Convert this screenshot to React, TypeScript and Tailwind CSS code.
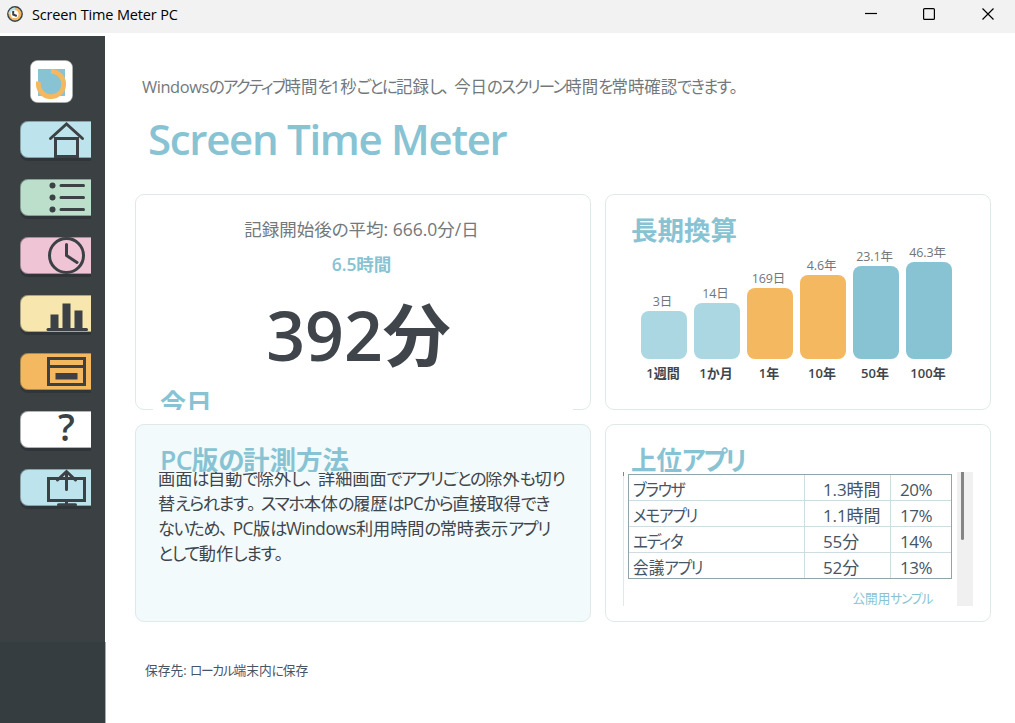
import type {ReactNode} from "react";

const INK = "#3b4144";

const bars = [
    { label: "1週間", value: "3日", height: 48, color: "bg-[#aad7e1]" },
    { label: "1か月", value: "14日", height: 56, color: "bg-[#aad7e1]" },
    { label: "1年", value: "169日", height: 71, color: "bg-[#f4b860]" },
    { label: "10年", value: "4.6年", height: 84, color: "bg-[#f4b860]" },
    { label: "50年", value: "23.1年", height: 93, color: "bg-[#87c3d3]" },
    { label: "100年", value: "46.3年", height: 97, color: "bg-[#87c3d3]" },
];

const apps = [
    { name: "ブラウザ", time: "1.3時間", share: "20%" },
    { name: "メモアプリ", time: "1.1時間", share: "17%" },
    { name: "エディタ", time: "55分", share: "14%" },
    { name: "会議アプリ", time: "52分", share: "13%" },
];

const method = [
    "画面は自動で除外し、詳細画面でアプリごとの除外も切り",
    "替えられます。スマホ本体の履歴はPCから直接取得でき",
    "ないため、PC版はWindows利用時間の常時表示アプリ",
    "として動作します。",
];

// kana is set tighter than kanji, punctuation keeps its full width
function Jp({ text, kana = "tracking-[-0.08em]", scale = "" }: { text: string; kana?: string; scale?: string }) {
    const parts = text.split(/([\u3041-\u30ff]+|[、。]|[A-Za-z]+)/);
    const getClass = (part: string) => {
        if (/[、。]/.test(part)) return "tracking-[-0.2em] [font-feature-settings:normal]";
        if (/[A-Za-z]/.test(part)) return "tracking-[-0.025em]";
        return kana;
    };
    return (
        <span className={`inline-block ${scale}`}>
            {parts.map((part, i) => i % 2 ? <span key={i} className={getClass(part)}>{part}</span> : part)}
        </span>
    );
}

function NavButton({ color, children }: { color: string; children: ReactNode }) {
    return (
        <div className={`h-[37px] w-[71px] overflow-hidden rounded-l-lg shadow-[0_3px_0_#30353a,inset_0_1px_0_#3b404366,inset_1px_0_0_#3b404366,inset_0_-1px_0_#3b404366] ${color}`}>
            {children}
        </div>
    );
}

function Icon({ children }: { children: ReactNode }) {
    return (
        <svg width="71" height="37" viewBox="0 0 71 37" fill="none" stroke={INK} strokeWidth="3">
            {children}
        </svg>
    );
}

function Sidebar() {
    return (
        <div className="flex w-[105px] shrink-0 flex-col bg-[#3b4043]">
            <div className="flex h-[606px] flex-col gap-[21px] pl-5 pt-6">
                <svg className="-mb-[3px] ml-[10px] shrink-0" width="43" height="43" viewBox="0 0 43 43">
                    <rect x="0.5" y="0.5" width="42" height="42" rx="7" fill="#fff" stroke="#aeb1b2" strokeWidth="0.6"/>
                    <rect x="8" y="9" width="27" height="27" fill="#87c3d3"/>
                    <path d="M21 11.3A12.7 12.7 0 1 1 8.5 21.7" fill="none" stroke="#f4b860" strokeWidth="4.8"/>
                </svg>
                <NavButton color="bg-[#bde4ed]">
                    <Icon>
                        <path d="M30.5 17.5L46.5 3L62.5 17.5" strokeLinecap="round"/>
                        <path d="M35.5 17.5H57.5V35.5H35.5Z"/>
                    </Icon>
                </NavButton>
                <NavButton color="bg-[#bbdfcb]">
                    <Icon>
                        <g fill={INK} stroke="none">
                            <circle cx="32.5" cy="6.5" r="3"/>
                            <circle cx="32.5" cy="18.5" r="3"/>
                            <circle cx="32.5" cy="30.5" r="3"/>
                        </g>
                        <path d="M41 6.5H63.5M41 18.5H63.5M41 30.5H63.5" strokeLinecap="round"/>
                    </Icon>
                </NavButton>
                <NavButton color="bg-[#efc4d4]">
                    <Icon>
                        <circle cx="46.5" cy="18.5" r="17"/>
                        <path d="M46.5 7.5V18.5L57 25.5" strokeLinecap="round" strokeLinejoin="round"/>
                    </Icon>
                </NavButton>
                <NavButton color="bg-[#f7e6ad]">
                    <Icon>
                        <path d="M28 34.5H66.5" strokeLinecap="round"/>
                        <path d="M30.5 19.5h8V34h-8zM42.5 8.5h8V34h-8zM54.5 15.5h8V34h-8z" fill={INK} stroke="none"/>
                    </Icon>
                </NavButton>
                <NavButton color="bg-[#f4b860]">
                    <Icon>
                        <path d="M28.5 5.5H64.5V31.5H28.5ZM28.5 13.5H64.5"/>
                        <path d="M35.5 20h22v6.5h-22z" fill={INK} stroke="none"/>
                    </Icon>
                </NavButton>
                <NavButton color="bg-white">
                    <div className="pl-[38px] text-[37px] leading-[31px] font-semibold text-[#3b4144]">?</div>
                </NavButton>
                <NavButton color="bg-[#bde4ed]">
                    <Icon>
                        <path d="M28.5 9.5H64.5V31.5H28.5ZM46.5 32V36"/>
                        <path d="M38.5 35.8H55.5M46.5 2.5V20.5M37.5 11L46.5 2.5L55.5 11" strokeLinecap="round"/>
                    </Icon>
                </NavButton>
            </div>
            <div className="-mr-px flex-1 border-r border-[#a9acad] bg-[#363d40]"/>
        </div>
    );
}

function TitleBar() {
    return (
        <div className="flex h-[33px] shrink-0 items-center bg-[#f2f2f2] pl-[7px] pr-5 text-black">
            <svg className="mb-[5px]" width="16" height="16" viewBox="0 0 16 16">
                <circle cx="8" cy="8" r="7.2" fill="#f4b860" stroke="#33434d" strokeWidth="1.4"/>
                <path d="M1.6 8A6.4 6.4 0 0 1 8 1.6L8 8Z" fill="#b5e2ea"/>
                <circle cx="7.6" cy="8.2" r="3.9" fill="#fff"/>
                <path d="M6.2 5V8.5L9.8 10" fill="none" stroke="#33434d" strokeWidth="2"/>
            </svg>
            <div className="mb-[4px] ml-[9px] text-[14.5px] tracking-[-0.15px]">Screen Time Meter PC</div>
            <svg className="mb-[5px] ml-auto" width="130" height="14" viewBox="0 0 130 14" fill="none" stroke="#000" strokeWidth="1.2">
                <path d="M0 6.5H12"/>
                <rect x="58.6" y="1.6" width="10.8" height="10.8" rx="1"/>
                <path d="M117.5 1.5L128.5 12.5M128.5 1.5L117.5 12.5"/>
            </svg>
        </div>
    );
}

export default function App() {
    return (
        <div className="flex h-[723px] w-[1015px] flex-col overflow-hidden bg-white font-['Open_Sans','Noto_Sans_CJK_JP',sans-serif] whitespace-nowrap [font-feature-settings:'palt']">
            <TitleBar/>
            <div className="mt-[3px] flex min-h-0 flex-1">
                <Sidebar/>
                <div className="flex flex-1 flex-col pl-[30px] pr-6">
                    <div className="mt-[38px] h-[26px] pl-[7px] text-[17px] leading-[26px] text-[#72797c]">
                        <Jp text="Windowsのアクティブ時間を1秒ごとに記録し、今日のスクリーン時間を常時確認できます。" kana="tracking-[-0.105em]" scale="origin-left scale-x-[0.965]"/>
                    </div>
                    <div className="mt-[12px] h-[82px] shrink-0 pl-[13px] text-[42px] leading-[54px] font-semibold tracking-[-1.3px] text-[#87c3d3]">Screen Time Meter</div>

                    <div className="grid grid-cols-[456px_386px] grid-rows-[216px_198px] gap-[14px]">
                        <div className="relative flex flex-col items-center rounded-[9px] border border-[#dfe9ea]">
                            <div className="mt-[21px] mr-[3px] text-[17.5px] leading-[26px] text-[#72797c]">記録開始後の平均: 666.0分/日</div>
                            <div className="mt-[9px] mr-[3px] text-[17.5px] leading-[26px] font-semibold tracking-[-0.1px] text-[#87c3d3]">6.5時間</div>
                            <div className="mt-[16px] mr-[9px] text-[68px] leading-[84px] font-semibold text-[#3f454a]">392分</div>
                            <div className="absolute -bottom-px left-[17px] h-[26px] w-[420px] overflow-hidden bg-white pl-[7px] text-[26px] leading-[39px] font-semibold text-[#87c3d3]">今日</div>
                        </div>

                        <div className="rounded-[9px] border border-[#dfe9ea]">
                            <div className="mt-[15px] pl-[25px] text-[26.5px] leading-10 font-semibold text-[#87c3d3]">長期換算</div>
                            <div className="-mt-[11px] flex h-[120px] items-end gap-[7px] pl-[35px]">
                                {bars.map((bar) => (
                                    <div key={bar.label} className="flex w-[46px] flex-col items-center">
                                        <div className="mr-[3px] text-[12.5px] leading-[18px] tracking-[-0.1px] text-[#727679]">{bar.value}</div>
                                        <div className={`w-full rounded-lg ${bar.color}`} style={{ height: bar.height }}/>
                                    </div>
                                ))}
                            </div>
                            <div className="mt-1 flex gap-[7px] pl-[34px]">
                                {bars.map((bar) => (
                                    <div key={bar.label} className="w-[46px] text-center text-[13px] leading-5 font-semibold text-[#3f454a]">{bar.label}</div>
                                ))}
                            </div>
                        </div>

                        <div className="rounded-[9px] border border-[#dfe9ea] bg-[#f2fafc]">
                            <div className="mt-[15px] h-8 overflow-hidden pl-[24px] text-[26.5px] leading-10 font-semibold text-[#87c3d3]"><Jp text="PC版の計測方法" kana="tracking-[-0.05em]"/></div>
                            <div className="h-[120px] overflow-hidden pl-[22px] text-[17.5px] leading-[25px] text-[#3f454a]">
                                <div className="-mt-[6px]">
                                    {method.map((line) => <div key={line} className="h-[25px]"><Jp text={line} scale="origin-left scale-x-[0.98]"/></div>)}
                                </div>
                            </div>
                        </div>

                        <div className="rounded-[9px] border border-[#dfe9ea]">
                            <div className="mt-[15px] h-8 overflow-hidden pl-[25px] text-[26.5px] leading-10 font-semibold text-[#87c3d3]"><Jp text="上位アプリ" scale="origin-left scale-x-[0.96]"/></div>
                            <div className="ml-[17px] flex h-[134px] w-[350px] border-l border-[#dfe9ea]">
                                <div className="-ml-px h-1 w-px bg-[#858585]"/>
                                <div className="ml-1 mt-[2px] w-[324px] text-[#465566]">
                                    <div className="divide-y divide-[#cfdde2] border border-[#8fa5aa] text-[17px]">
                                        {apps.map((app) => (
                                            <div key={app.name} className="flex h-[26px] divide-x divide-[#cfdde2] leading-[30px] last:h-[25px]">
                                                <div className="w-[176px] pl-1"><Jp text={app.name} scale="origin-left scale-x-[0.92]"/></div>
                                                <div className="w-[86px] pl-[18px] tracking-[-0.1px]">{app.time}</div>
                                                <div className="pl-[9px] tracking-[-0.5px]">{app.share}</div>
                                            </div>
                                        ))}
                                    </div>
                                    <div className="mt-[9px] pr-5 text-right text-[13px] leading-5 text-[#87c3d3]"><Jp text="公開用サンプル" scale="origin-right scale-x-[0.97]"/></div>
                                </div>
                                <div className="ml-[5px] w-4 bg-[#f0f0f0] pl-1"><div className="h-[68px] w-[3px] rounded-b bg-[#858585]"/></div>
                            </div>
                        </div>
                    </div>

                    <div className="mt-[38px] pl-[10px] text-[13px] leading-5 text-[#465566]"><Jp text="保存先: ローカル端末内に保存" kana="tracking-[-0.1em]" scale="origin-left scale-x-[0.98]"/></div>
                </div>
            </div>
        </div>
    );
}
